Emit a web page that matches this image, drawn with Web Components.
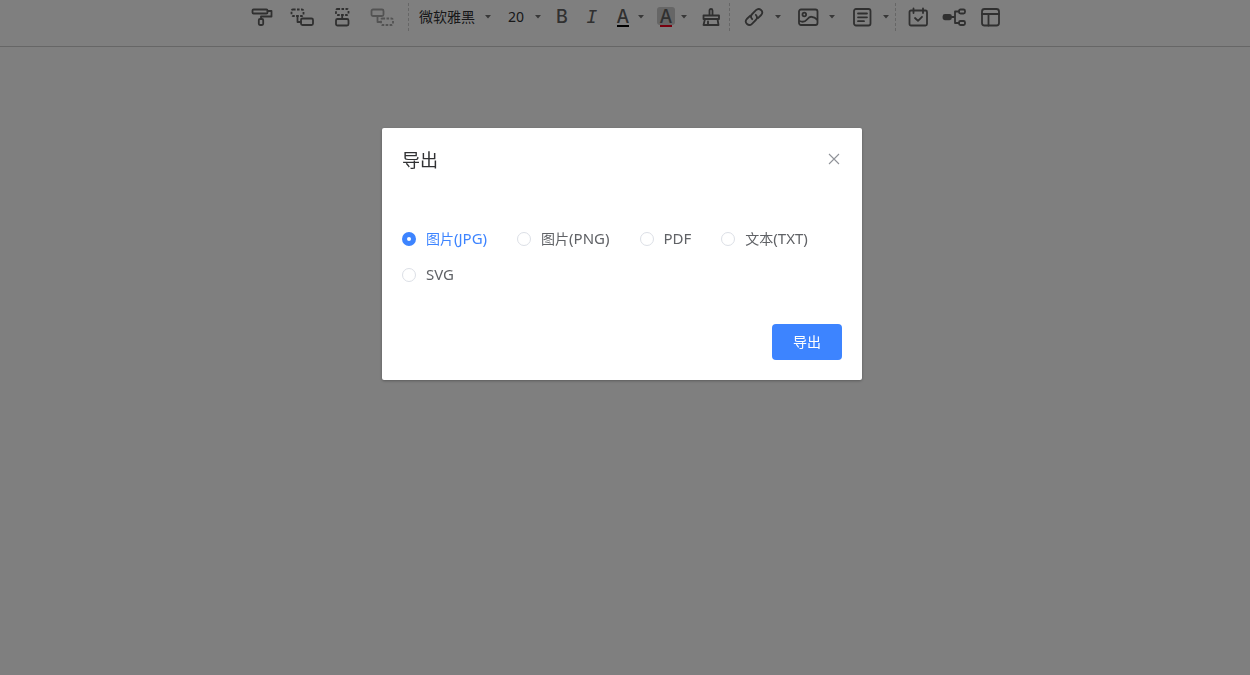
<!DOCTYPE html>
<html lang="zh-CN">
<head>
<meta charset="utf-8">
<title>导出</title>
<style>
html,body{margin:0;height:100%}
body{background:#fff;color:#303133;font:14px/20px "Noto Sans","Noto Sans CJK SC",sans-serif}
</style>
</head>
<body>
<mind-editor></mind-editor>
<script>
const define=(name,html,setup)=>customElements.define(name,class extends HTMLElement{
  constructor(){
    super();
    const t=document.createElement('template');
    t.innerHTML=html;
    this.attachShadow({mode:'open'}).append(t.content.cloneNode(true));
    if(setup)setup(this,this.shadowRoot);
  }
});

define('tool-button',`<style>
:host{display:flex;flex:none}
button{all:unset;display:flex;align-items:center;justify-content:center;width:24px;height:34px;color:inherit;cursor:pointer}
:host([wide]) button{width:40px}
:host([letter]) button{width:30px}
:host([disabled]) button{opacity:.55;cursor:default}
::slotted(svg){display:block;width:24px;height:24px;fill:none;stroke:currentColor;stroke-width:1.8;stroke-linejoin:round;stroke-linecap:round}
</style><button type="button"><slot></slot></button>`,(h,r)=>{
  r.querySelector('button').setAttribute('aria-label',h.getAttribute('label')||'');
});

define('drop-caret',`<style>
:host{display:flex;flex:none}
button{all:unset;display:flex;align-items:center;justify-content:center;width:12px;height:34px;cursor:pointer}
svg{display:block;width:6px;height:4px;fill:#707070}
</style><button type="button" aria-label="展开"><svg viewBox="0 0 6 4"><path d="M0 0h6L3 3.4z"/></svg></button>`);

define('tool-select',`<style>
:host{display:grid;flex:none;align-items:center}
select,svg{grid-area:1/1}
select{appearance:none;border:0;background:none;margin:0;padding:0;width:100%;height:34px;font:inherit;color:#303133}
svg{justify-self:end;width:6px;height:4px;margin-right:3px;fill:#707070;pointer-events:none}
</style><select></select><svg viewBox="0 0 6 4"><path d="M0 0h6L3 3.4z"/></svg>`,(h,r)=>{
  const s=r.querySelector('select');
  s.setAttribute('aria-label',h.getAttribute('label'));
  s.add(new Option(h.getAttribute('value')));
});

define('tool-divider',`<style>:host{display:block;flex:none;width:0;height:28px;border-left:1px dashed #ccc}</style>`);

define('color-letter',`<style>
:host{display:flex;flex-direction:column;align-items:center;width:18px;font:500 18px/16px Inter,sans-serif}
span{width:18px;padding-top:2px;text-align:center;border-radius:3px}
:host([filled]) span{background:#ccc}
i{width:12px;height:2px;background:var(--ink)}
</style><span>A</span><i></i>`);

define('editor-toolbar',`<style>
:host{display:flex;justify-content:center;align-items:center;padding:0 6px 12px 0;border-bottom:1px solid #ccc;color:#606060}
.split{display:flex;gap:6px}
.row{display:flex;align-items:center}
.insert{gap:12px;margin:0 3px 0 12px}
.extra{gap:12px;margin-left:10px}
.font{width:75px;margin:0 14px 0 10px}
.size{width:36px;margin-right:3px}
.colors{gap:7px;margin:0 9px 0 4px}
.brush{margin-right:6px}
tool-divider.first{margin-left:6px}
b{font:500 18px/20px Inter,sans-serif}
em{font:italic 18px/20px "DejaVu Sans Mono",monospace}
</style>
<div class="row">
<tool-button wide label="格式刷"><svg viewBox="0 0 24 24"><rect x="2.500" y="4.500" width="15" height="4" rx="1"/><path d="M17.500 6H21.500V11.500H11V14"/><rect x="8.800" y="14" width="4.400" height="6" rx="1.200"/></svg></tool-button>
<tool-button wide label="插入子主题"><svg viewBox="0 0 24 24"><rect x="1.500" y="4.500" width="12" height="6.500" rx="1.500" stroke-linecap="butt" stroke-dasharray="2.600 1.400"/><path d="M7.500 11V17H11"/><rect x="11" y="13.500" width="12" height="6.500" rx="1.500"/></svg></tool-button>
<tool-button wide label="插入同级主题"><svg viewBox="0 0 24 24"><rect x="6" y="4" width="12.500" height="6" rx="1.500" stroke-linecap="butt" stroke-dasharray="2.600 1.400"/><path d="M12.200 10V14"/><rect x="6" y="14" width="12.500" height="6.500" rx="1.500"/></svg></tool-button>
<tool-button wide disabled label="插入父主题"><svg viewBox="0 0 24 24"><rect x="1.500" y="4.500" width="12" height="6.500" rx="1.500"/><path d="M7.500 11V17H11"/><rect x="11" y="13.500" width="12" height="6.500" rx="1.500" stroke-linecap="butt" stroke-dasharray="2.600 1.400"/></svg></tool-button>
</div>
<tool-divider class="first"></tool-divider>
<tool-select class="font" label="字体" value="微软雅黑"></tool-select>
<tool-select class="size" label="字号" value="20"></tool-select>
<tool-button letter label="加粗"><b>B</b></tool-button>
<tool-button letter label="斜体"><em>I</em></tool-button>
<div class="row colors">
<div class="row"><tool-button label="字体颜色"><color-letter style="--ink:#000"></color-letter></tool-button><drop-caret></drop-caret></div>
<div class="row"><tool-button label="背景颜色"><color-letter filled style="--ink:#f0001c"></color-letter></tool-button><drop-caret></drop-caret></div>
</div>
<tool-button class="brush" label="清除格式"><svg viewBox="0 0 24 24"><path d="M10.500 10.500V5.500Q10.500 4 12 4T13.500 5.500V10.500M4.500 14V10.500H20V14zM6 14L4.500 20H19.500L18.500 14M9 16.500V20"/></svg></tool-button>
<tool-divider></tool-divider>
<div class="row insert">
<div class="split"><tool-button label="链接"><svg viewBox="0 0 24 24"><path d="M10.200 14.200Q7.700 11.500 10.200 9L14 5.200Q16.500 2.800 19 5T19.200 10L16 13.200M13.800 9.800Q16.300 12.500 13.800 15L10 18.800Q7.500 21.200 5 19T4.800 14L8 10.800"/></svg></tool-button><drop-caret></drop-caret></div>
<div class="split"><tool-button label="图片"><svg viewBox="0 0 24 24"><rect x="3" y="4.500" width="18.500" height="15.500" rx="2"/><circle cx="8.300" cy="9.500" r="1.800"/><path d="M3.500 16Q8 18 11 14.500T16 12Q18.500 12 21 14.500"/></svg></tool-button><drop-caret></drop-caret></div>
<div class="split"><tool-button label="备注"><svg viewBox="0 0 24 24"><rect x="4" y="4" width="16.500" height="16.500" rx="2"/><path d="M8 8.500H17M8 12.300H17M8 16.200H14"/></svg></tool-button><drop-caret></drop-caret></div>
</div>
<tool-divider></tool-divider>
<div class="row extra">
<tool-button label="任务"><svg viewBox="0 0 24 24"><rect x="3.500" y="5.500" width="17.500" height="15" rx="1.500"/><path d="M7.500 3.500V8M17 3.500V8M9 13L12 15.800L16 11.800"/></svg></tool-button>
<tool-button label="结构"><svg viewBox="0 0 24 24"><rect x="1.500" y="9.800" width="7.500" height="4.500" rx="1.500" fill="currentColor"/><path d="M9 12H13M17 6.500H13V18H17"/><rect x="17" y="4.500" width="6" height="4" rx="1.500"/><rect x="17" y="16" width="6" height="4" rx="1.500"/></svg></tool-button>
<tool-button label="布局"><svg viewBox="0 0 24 24"><rect x="4" y="4" width="17" height="16.500" rx="2.500"/><path d="M4 9H21M10.500 9V20.500"/></svg></tool-button>
</div>`);

define('export-dialog',`<style>
:host{position:fixed;inset:0;background:rgba(0,0,0,.5);padding:128px 6px 0 0;overflow:auto}
section{box-sizing:border-box;width:480px;max-width:100%;margin:0 auto;background:#fff;border-radius:2px;box-shadow:0 1px 3px rgba(0,0,0,.3)}
header{display:flex;justify-content:space-between;align-items:center;padding:20px 20px 10px}
h2{margin:0;font-size:18px;line-height:24px;font-weight:400;color:#303133}
.close{all:unset;display:flex;width:16px;height:24px;align-items:center;cursor:pointer}
.close svg{width:16px;height:16px;stroke:#909399;stroke-width:1.1;fill:none}
fieldset{display:flex;flex-wrap:wrap;column-gap:30px;margin:0;border:0;padding:39px 20px 31px;color:#606266}
label{display:flex;align-items:center;gap:10px;height:36px;cursor:pointer}
label span{font-size:15px;padding-bottom:2px}
label small{font-size:14px}
input{appearance:none;box-sizing:border-box;width:14px;height:14px;margin:0;border:1px solid #dcdfe6;border-radius:50%;background:#fff}
input:checked{border:5px solid #3d84ff}
label:has(:checked){color:#3d84ff}
footer{display:flex;justify-content:flex-end;padding:0 20px 20px}
footer button{border:0;border-radius:4px;background:#3d84ff;color:#fff;width:70px;height:36px;padding:0;font:inherit;cursor:pointer}
</style>
<section role="dialog" aria-labelledby="t">
<header><h2 id="t">导出</h2><button class="close" type="button" aria-label="关闭"><svg viewBox="0 0 16 16"><path d="M3 2L13 12M13 2L3 12"/></svg></button></header>
<fieldset aria-label="格式">
<label><input type="radio" name="f" checked><span><small>图片</small>(JPG)</span></label>
<label><input type="radio" name="f"><span><small>图片</small>(PNG)</span></label>
<label><input type="radio" name="f"><span>PDF</span></label>
<label><input type="radio" name="f"><span><small>文本</small>(TXT)</span></label>
<label><input type="radio" name="f"><span>SVG</span></label>
</fieldset>
<footer><button type="button">导出</button></footer>
</section>`);

define('mind-editor',`<style>:host{display:block;min-height:100%}</style>
<editor-toolbar></editor-toolbar><export-dialog></export-dialog>`);
</script>
</body>
</html>
